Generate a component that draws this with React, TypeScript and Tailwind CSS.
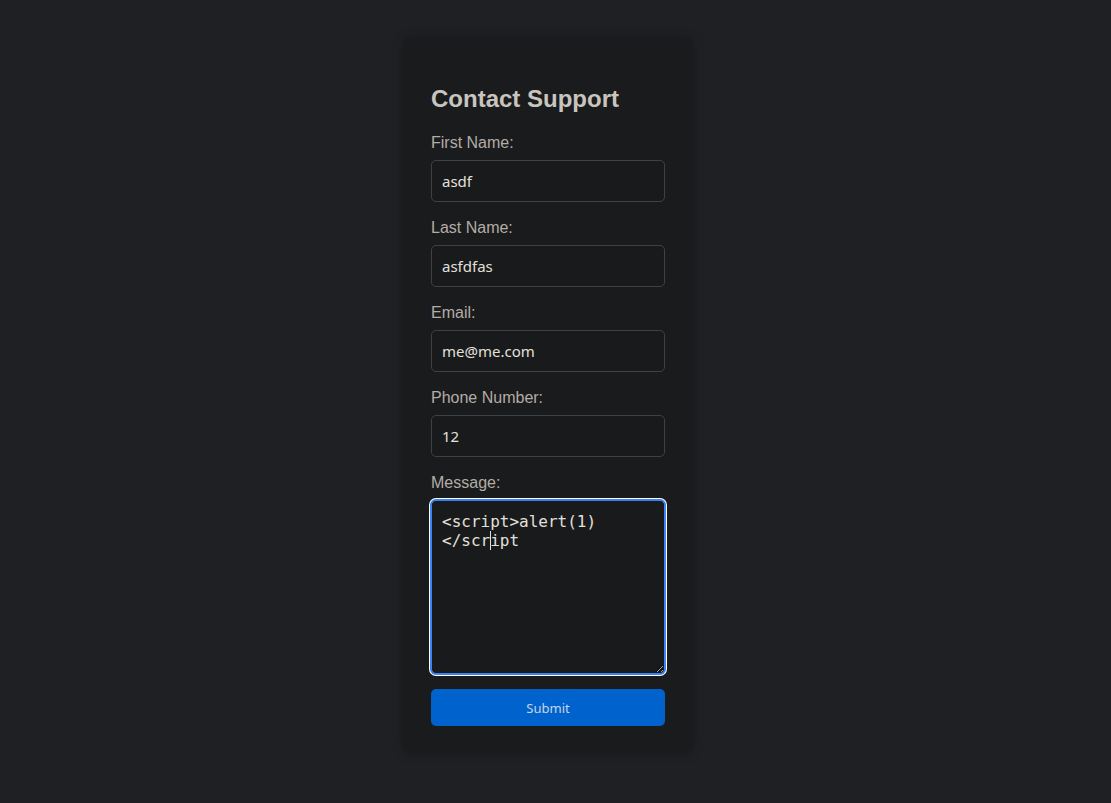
import React from "react";

const fields = [
  { label: "First Name:", value: "asdf" },
  { label: "Last Name:", value: "asfdfas" },
  { label: "Email:", value: "me@me.com" },
  { label: "Phone Number:", value: "12" },
];

const App: React.FC = () => {
  return (
    <div className="min-h-screen bg-[#1f2023] flex justify-center items-start pt-[38px] pr-[15px] font-['Liberation_Sans',Arial,sans-serif]">
      <form
        className="w-[290px] bg-[#1a1b1d] rounded-lg px-7 pt-[47px] pb-[27px] shadow-[0_0_12px_rgba(0,0,0,0.25)]"
        onSubmit={(e) => e.preventDefault()}
      >
        <h2 className="text-2xl font-bold text-[#c9c5be] mb-[20px] leading-[27.6px]">Contact Support</h2>

        {fields.map((f) => (
          <div key={f.label} className="mb-[15.6px]">
            <label className="block text-base leading-[18.4px] text-[#b3ada5] pt-px mb-[8px]">{f.label}</label>
            <input
              type="text"
              defaultValue={f.value}
              className="block w-full h-[42px] px-[10px] rounded-[5px] border border-[#3e4246] bg-[#181a1b] text-[15px] text-[#e3e0dc] font-['Noto_Sans',sans-serif] outline-none"
            />
          </div>
        ))}

        <div>
          <label className="block text-base leading-[18.4px] text-[#b3ada5] pt-px mb-[8px]">Message:</label>
          <div className="relative">
            <textarea
              defaultValue={"<script>alert(1)\n</script"}
              className="block w-full h-[174px] px-[10px] pt-[11px] pb-[9px] rounded-[5px] border border-[#3b82f6] bg-[#181a1b] text-base leading-[19px] text-[#e3e0dc] caret-transparent font-['DejaVu_Sans_Mono',monospace] outline-none shadow-[0_0_0_1px_#3b82f6,0_0_0_2px_#ffffff]"
            />
            {/* text caret */}
            <span className="absolute left-[59px] top-[31px] h-[19px] w-px bg-[#e3e0dc]" />
          </div>
        </div>

        <button
          type="submit"
          className="mt-[15px] w-full h-[37px] pt-[3px] rounded-[5px] bg-[#0062cc] text-[13px] text-[#c6d5e8] font-['Noto_Sans',sans-serif]"
        >
          Submit
        </button>
      </form>
    </div>
  );
};

export default App;
